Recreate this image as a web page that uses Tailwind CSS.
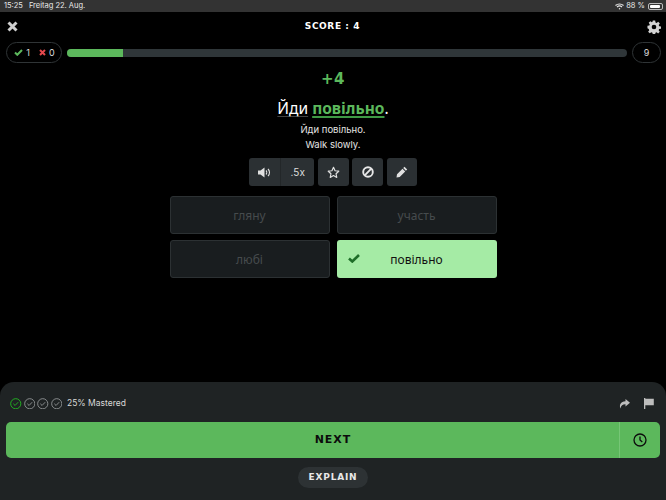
<!DOCTYPE html>
<html lang="en">
<head>
    <meta charset="UTF-8">
    <title>Score</title>
    <script src="https://cdn.jsdelivr.net/npm/@tailwindcss/browser@4"></script>
</head>
<body class="bg-black">
<div class="w-[666px] h-[500px] flex flex-col overflow-hidden bg-black text-white font-['Inter','Liberation_Sans',sans-serif]">

    <!-- status bar -->
    <div class="h-[12px] bg-[#333333] flex items-center justify-between pl-[4px] pr-[3px] text-[7.500px] leading-none text-[#e8e8e8]">
        <div class="flex gap-[6px]"><span>15:25</span><span>Freitag 22. Aug.</span></div>
        <div class="flex items-center gap-[2px]">
            <svg width="9" height="7" viewBox="0 0 18 14" fill="none" stroke="#e8e8e8" stroke-width="2.400"><path d="M1 5c4.500-4 11.500-4 16 0M4 8c2.800-2.500 7.200-2.500 10 0"/><circle cx="9" cy="11.500" r="1.500" fill="#e8e8e8" stroke="none"/></svg>
            <span>88 %</span>
            <div class="w-[15px] h-[7px] ml-[1px] rounded-[2px] border border-[#bbbbbb] p-[1px]"><div class="h-full w-[88%] bg-white rounded-[1px]"></div></div>
        </div>
    </div>

    <!-- title row -->
    <div class="h-[29px] flex items-center justify-between pl-[7px] pr-[5px]">
        <svg width="11" height="11" viewBox="0 0 11 11" stroke="#cfcfcf" stroke-width="3"><path d="M1.500 1.500l8 8M9.500 1.500l-8 8"/></svg>
        <div class="font-['DejaVu_Sans',sans-serif] font-bold text-[9px] tracking-[0.6px] leading-none">SCORE : 4</div>
        <svg width="14" height="14" viewBox="0 0 24 24" fill="#d2d2d2"><path fill-rule="evenodd" d="M10 1h4l.6 3.200 1.900.8 2.700-1.900 2.800 2.800-1.900 2.700.8 1.900 3.100.5v4l-3.200.6-.8 1.900 1.900 2.700-2.800 2.800-2.700-1.900-1.900.8-.6 3.100h-4l-.6-3.200-1.900-.8-2.700 1.900-2.800-2.800 1.900-2.700-.8-1.900L.8 14v-4L4 9.400l.8-1.900L2.900 4.900l2.800-2.800 2.700 1.900 1-.8zM12 8a4 4 0 100 8 4 4 0 000-8z"/></svg>
    </div>

    <!-- progress row -->
    <div class="h-[21px] mt-[1px] flex items-center pl-[6px] pr-[5px]">
        <div class="w-[56px] h-[21px] pl-[1px] rounded-full border border-[#2f3436] flex items-center justify-center gap-[3px] text-[9px]">
            <svg width="9" height="7" viewBox="0 0 9 7" fill="none" stroke="#5cb85c" stroke-width="2"><path d="M1 3.500l2.300 2.300L8 1"/></svg>
            <span class="text-[#dddddd] mr-[6px]">1</span>
            <svg width="7" height="7" viewBox="0 0 7 7" stroke="#e5484d" stroke-width="2"><path d="M1 1l5 5M6 1L1 6"/></svg>
            <span class="text-[#dddddd]">0</span>
        </div>
        <div class="ml-[5px] w-[560px] h-[8px] rounded-full bg-[#2f3639] overflow-hidden">
            <div class="h-full w-[56px] bg-[#5cb85c]"></div>
        </div>
        <div class="ml-[5px] w-[29px] h-[21px] rounded-full border border-[#2f3436] flex items-center justify-center text-[9px] text-[#dddddd]">9</div>
    </div>

    <!-- question -->
    <div class="flex flex-col items-center">
        <div class="mt-[9px] h-[14px] font-['DejaVu_Sans',sans-serif] font-bold text-[15px] leading-[14px] tracking-[0.5px] text-[#5cb85c]">+4</div>
        <div class="mt-[11px] h-[22px] font-['Noto_Sans',sans-serif] text-[15.500px] leading-[22px]">
            <span class="underline decoration-[#444444] decoration-1 underline-offset-2">Йди</span> <span class="font-bold text-[#5cb85c] underline decoration-[#3f9a45] decoration-2 underline-offset-2">повільно</span>.
        </div>
        <div class="mt-[3px] text-[9.500px] leading-[15px] text-center text-[#e5e5e5]">
            <div>Йди повільно.</div>
            <div>Walk slowly.</div>
        </div>

        <!-- audio and tools -->
        <div class="mt-[6px] flex gap-[3.500px]">
            <div class="flex h-[28px] rounded-[3px] bg-[#2b3033]">
                <div class="w-[32px] flex items-center justify-center border-r border-[#232729]">
                    <svg width="14" height="11" viewBox="0 0 14 11" fill="#e0e0e0"><path d="M0 3.500h2.500L6.500.5v10L2.500 7.500H0z"/><path d="M8 3.500c1 1 1 3 0 4M10 2c2 2 2 5 0 7" fill="none" stroke="#e0e0e0" stroke-width="1.100"/></svg>
                </div>
                <div class="w-[33px] flex items-center justify-center text-[10px] text-[#dddddd]">.5x</div>
            </div>
            <div class="w-[31px] h-[28px] rounded-[3px] bg-[#2b3033] flex items-center justify-center">
                <svg width="13" height="13" viewBox="0 0 24 24" fill="none" stroke="#e0e0e0" stroke-width="2.200" stroke-linejoin="round"><path d="M12 2.500l2.900 6.300 6.800.8-5 4.700 1.300 6.800-6-3.400-6 3.400 1.300-6.800-5-4.700 6.800-.8z"/></svg>
            </div>
            <div class="w-[31px] h-[28px] rounded-[3px] bg-[#2b3033] flex items-center justify-center">
                <svg width="12" height="12" viewBox="0 0 12 12" fill="none" stroke="#e8e8e8" stroke-width="1.900"><circle cx="6" cy="6" r="4.800"/><path d="M9.300 2.700l-6.600 6.600"/></svg>
            </div>
            <div class="w-[30px] h-[28px] rounded-[3px] bg-[#2b3033] flex items-center justify-center">
                <svg width="12" height="12" viewBox="0 0 12 12" fill="#e0e0e0"><path d="M8.500.8l2.700 2.700-1.300 1.300-2.700-2.700zM6.500 2.800l2.700 2.700-5.500 5.500-3.200.5.500-3.200z"/></svg>
            </div>
        </div>

        <!-- answers -->
        <div class="mt-[10px] w-[327px] grid grid-cols-2 gap-x-[7px] gap-y-[6px] font-['Noto_Sans',sans-serif] text-[12px]">
            <div class="h-[38px] pt-[2px] rounded-[3px] bg-[#191d1f] border border-[#2c3133] flex items-center justify-center text-[#464b4d]">гляну</div>
            <div class="h-[38px] pt-[2px] rounded-[3px] bg-[#191d1f] border border-[#2c3133] flex items-center justify-center text-[#464b4d]">участь</div>
            <div class="h-[38px] pt-[2px] rounded-[3px] bg-[#191d1f] border border-[#2c3133] flex items-center justify-center text-[#464b4d]">любі</div>
            <div class="relative h-[38px] pt-[2px] rounded-[3px] bg-[#a5eba5] flex items-center justify-center text-[#111111]">
                <svg class="absolute left-[11px] top-[14px]" width="12" height="9" viewBox="0 0 12 9" fill="none" stroke="#1e6e28" stroke-width="2.600"><path d="M1 4.500l3.300 3L11 1"/></svg>
                повільно
            </div>
        </div>
    </div>

    <!-- bottom sheet -->
    <div class="mt-auto h-[118px] rounded-t-[14px] bg-[#1f2324] px-[6px]">
        <div class="h-[40px] pt-[3px] flex items-center justify-between pl-[4px] pr-[6px]">
            <div class="flex items-center gap-[2px]">
                <svg width="11.500" height="11.500" viewBox="0 0 12 12" fill="none" stroke="#22b322"><circle cx="6" cy="6" r="5.300"/><path d="M3.500 6l1.800 1.800 3.200-3.400"/></svg>
                <svg width="11.500" height="11.500" viewBox="0 0 12 12" fill="none" stroke="#8b8f90"><circle cx="6" cy="6" r="5.300"/><path d="M3.500 6l1.800 1.800 3.200-3.400"/></svg>
                <svg width="11.500" height="11.500" viewBox="0 0 12 12" fill="none" stroke="#8b8f90"><circle cx="6" cy="6" r="5.300"/><path d="M3.500 6l1.800 1.800 3.200-3.400"/></svg>
                <svg width="11.500" height="11.500" viewBox="0 0 12 12" fill="none" stroke="#8b8f90"><circle cx="6" cy="6" r="5.300"/><path d="M3.500 6l1.800 1.800 3.200-3.400"/></svg>
                <span class="ml-[3px] text-[8.500px] text-[#d8d8d8]">25% Mastered</span>
            </div>
            <div class="flex items-center gap-[14px]">
                <svg width="11" height="10" viewBox="0 0 11 10" fill="#bdbdbd"><path d="M6.500 0L11 3.800 6.500 7.500V5.300C4 5.200 2 6.200 1.500 9.500 0 6 1.500 2.400 6.500 2.200z"/></svg>
                <svg width="10" height="11" viewBox="0 0 10 11" fill="#bdbdbd"><path d="M0 0h1.300v11H0zM1.300 .8h8.500v6.400H1.300z"/></svg>
            </div>
        </div>
        <div class="relative h-[36px] pt-[1px] flex items-center justify-center rounded-[5px] bg-[#5cb85c] font-['DejaVu_Sans',sans-serif] font-bold text-[11px] tracking-[1px] text-[#0c0c0c]">
            NEXT
            <div class="absolute right-0 top-0 bottom-0 w-[41px] border-l border-[#76c676] flex items-center justify-center">
                <svg width="14" height="14" viewBox="0 0 14 14" fill="none" stroke="#0c0c0c" stroke-width="1.300"><circle cx="7" cy="7" r="6"/><path d="M7 3.500V7l2.300 2"/></svg>
            </div>
        </div>
        <div class="mt-[9px] flex justify-center">
            <div class="w-[70px] h-[21px] rounded-full bg-[#2d3234] flex items-center justify-center font-['DejaVu_Sans',sans-serif] font-bold text-[9px] tracking-[0.8px] text-[#e8e8e8]">EXPLAIN</div>
        </div>
    </div>
</div>
</body>
</html>
